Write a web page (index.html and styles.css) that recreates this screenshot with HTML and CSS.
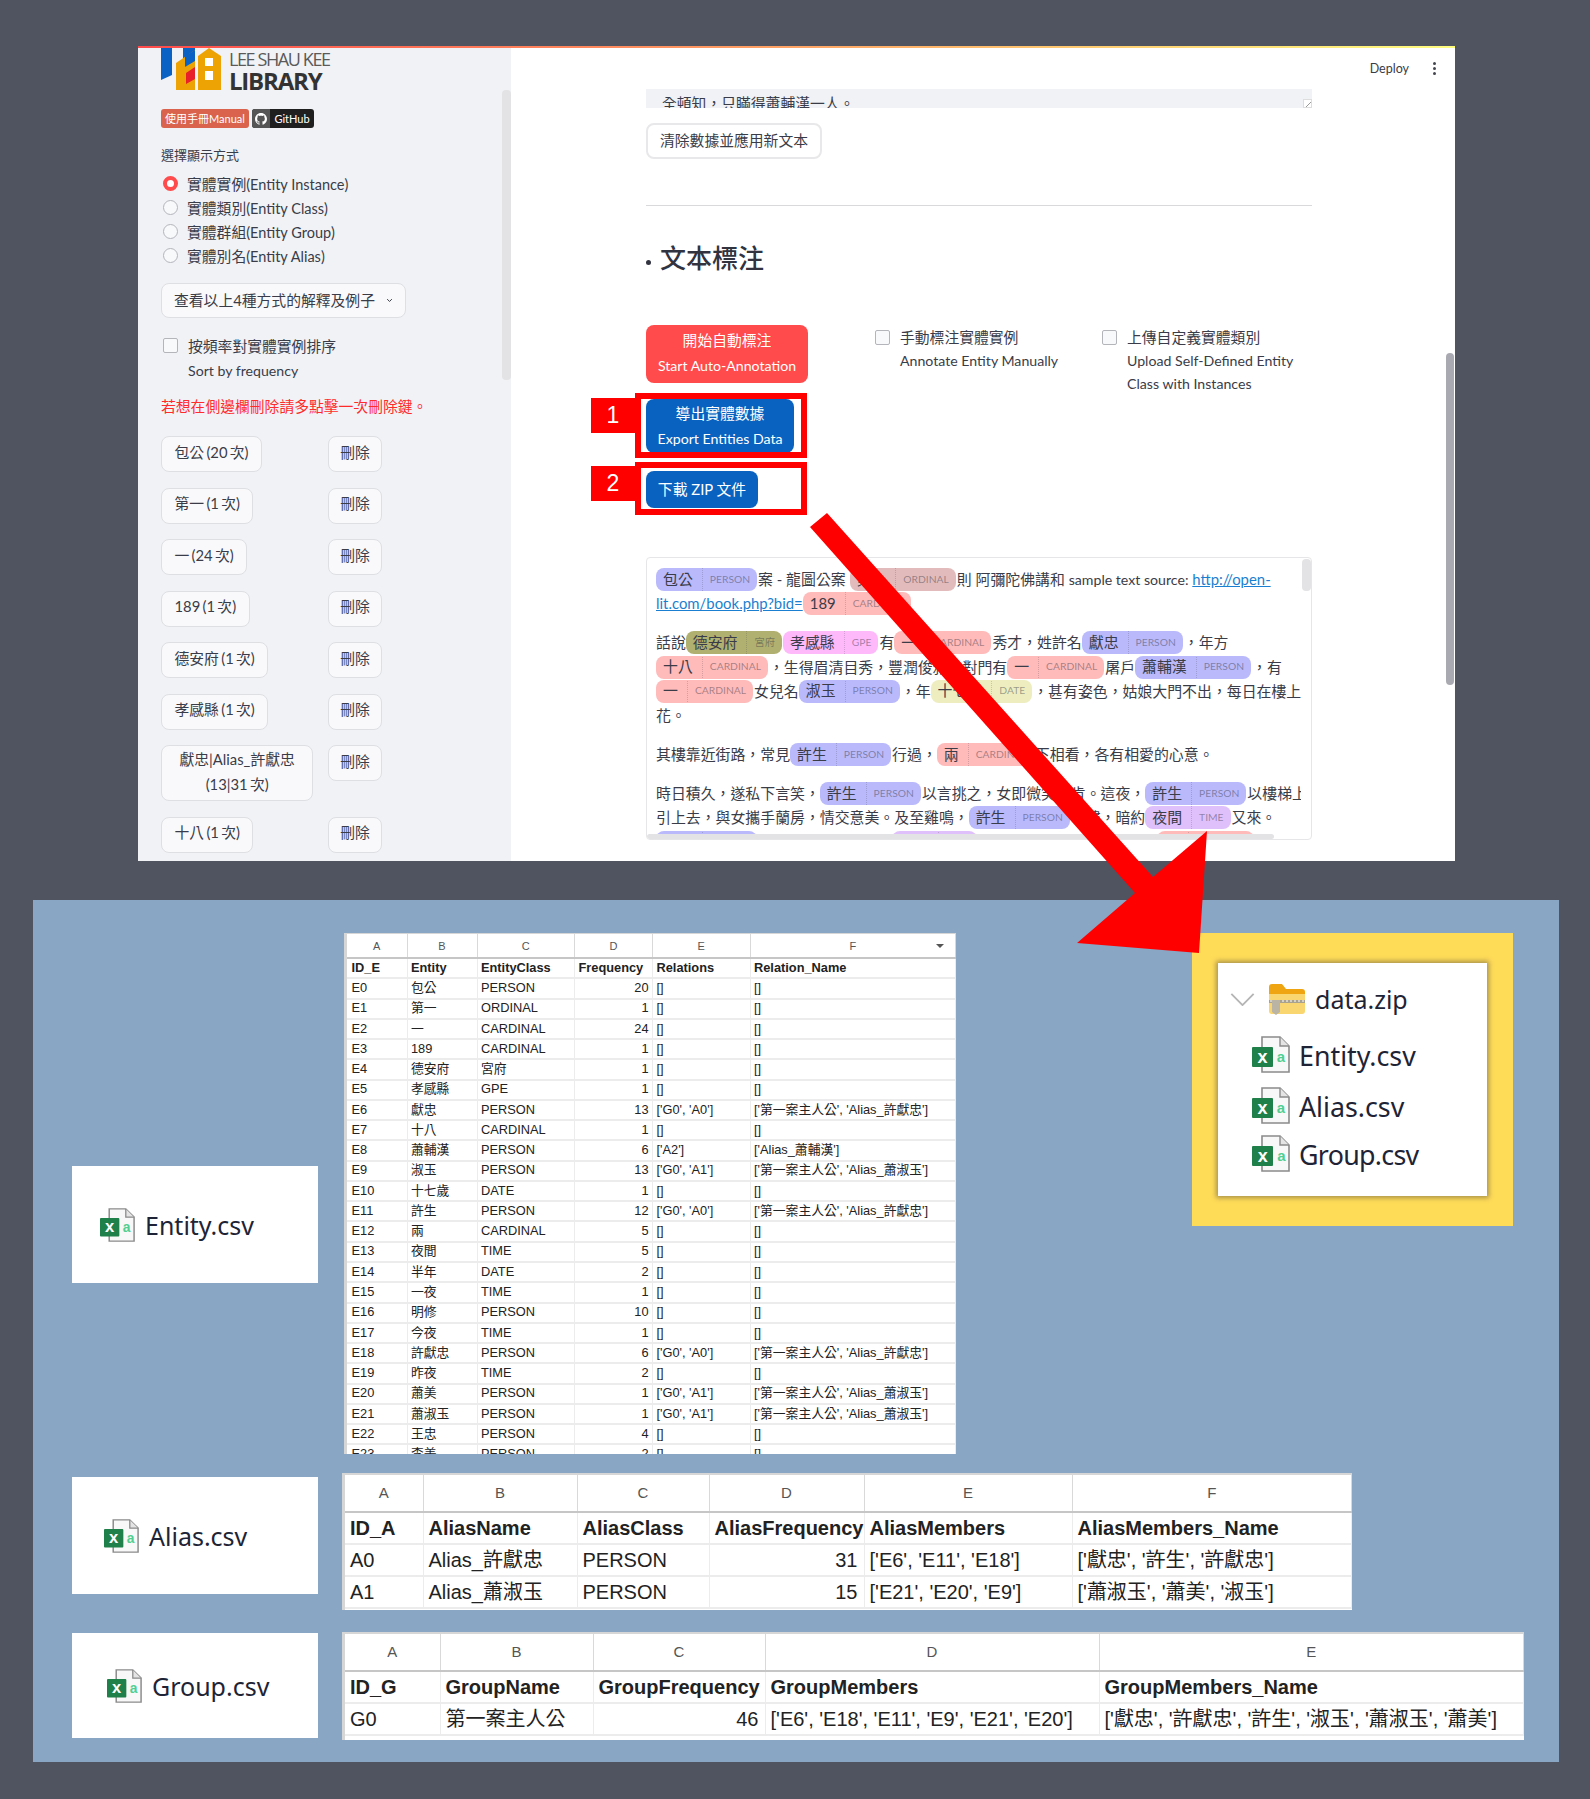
FILE: index.html
```html
<!DOCTYPE html>
<html lang="zh-Hant">
<head>
    <meta charset="UTF-8">
    <title>文本標注</title>
    <link rel="stylesheet" href="styles.css">
</head>
<body>
<!-- shared icons -->
<svg class="icon-defs" aria-hidden="true">
    <symbol id="xls" viewBox="0 0 38 37">
        <path d="M10 1H28L37 10V36H10Z" fill="#f8f8f8" stroke="#8b8b8b" stroke-width="1.6"/>
        <path d="M28 1V10H37" fill="#e4e4e4" stroke="#8b8b8b" stroke-width="1.4"/>
        <rect x="0" y="11" width="21" height="20" rx="1" fill="#1f8049"/>
        <text x="10.5" y="26.5" text-anchor="middle" font-size="18" font-weight="700" fill="#fff" font-family="Liberation Sans">x</text>
        <text x="29" y="26" text-anchor="middle" font-size="15" font-weight="700" fill="#50cf92" font-family="Liberation Sans">a</text>
    </symbol>
</svg>

<div class="page">
    <!-- app screenshot -->
    <div class="app">
        <div class="top-stripe"></div>
        <aside class="sidebar">
            <div class="logo">
                <svg class="logo-mark" viewBox="0 0 62 44">
                    <path d="M0 0H11V29L0 34Z" fill="#0a62c4"/>
                    <path d="M22 0H34V12L22 20Z" fill="#0a62c4"/>
                    <path d="M15 17L34 4V44H15Z" fill="#eea305"/>
                    <path d="M37 10L48 2L60 10V44H37Z" fill="#eea305"/>
                    <path d="M24 10L34 4V15L24 21Z" fill="#0a62c4"/>
                    <path d="M25 27L34 21V33L25 38Z" fill="#e8202a"/>
                    <path d="M44 12L52 12V20L44 20ZM44 25L52 25V34L44 34Z" fill="#fff"/>
                </svg>
                <div class="logo-text">
                    <div class="logo-small">LEE SHAU KEE</div>
                    <div class="logo-big">LIBRARY</div>
                </div>
            </div>
            <div class="badges">
                <span class="badge-manual">使用手冊Manual</span>
                <span class="badge-github">
                    <span class="badge-github-icon">
                        <svg viewBox="0 0 16 16" width="12" height="12"><path fill="#fff" d="M8 0C3.6 0 0 3.6 0 8c0 3.5 2.3 6.5 5.5 7.6.4.1.5-.2.5-.4v-1.4c-2.2.5-2.7-1-2.7-1-.4-.9-.9-1.2-.9-1.2-.7-.5.1-.5.1-.5.8.1 1.2.8 1.2.8.7 1.2 1.9.9 2.3.7.1-.5.3-.9.5-1.1-1.8-.2-3.6-.9-3.6-4 0-.9.3-1.6.8-2.1-.1-.2-.4-1 .1-2.1 0 0 .7-.2 2.2.8.6-.2 1.3-.3 2-.3s1.4.1 2 .3c1.5-1 2.2-.8 2.2-.8.4 1.1.2 1.9.1 2.1.5.6.8 1.3.8 2.1 0 3.1-1.9 3.7-3.7 3.9.3.3.6.8.6 1.5v2.2c0 .2.1.5.6.4C13.7 14.5 16 11.5 16 8c0-4.4-3.6-8-8-8z"/></svg>
                    </span>
                    <span class="badge-github-text">GitHub</span>
                </span>
            </div>
            <div class="field-label">選擇顯示方式</div>
            <div class="radio-group">
                <div class="radio-row"><span class="radio radio-on"></span><span>實體實例<span class="lat">(Entity Instance)</span></span></div>
                <div class="radio-row"><span class="radio"></span><span>實體類別<span class="lat">(Entity Class)</span></span></div>
                <div class="radio-row"><span class="radio"></span><span>實體群組<span class="lat">(Entity Group)</span></span></div>
                <div class="radio-row"><span class="radio"></span><span>實體別名<span class="lat">(Entity Alias)</span></span></div>
            </div>
            <button class="btn btn-side btn-expander">查看以上4種方式的解釋及例子
                <svg viewBox="0 0 12 12" width="12" height="12"><path d="M2 4.5L6 8.5L10 4.5" fill="none" stroke="#31333f" stroke-width="1.6"/></svg>
            </button>
            <div class="check-row check-row-side">
                <span class="checkbox"></span>
                <div>按頻率對實體實例排序<br><span class="lat">Sort by frequency</span></div>
            </div>
            <div class="warn-text">若想在側邊欄刪除請多點擊一次刪除鍵。</div>
            <div class="entity-list">
                <div><button class="btn btn-side">包公 (20 次)</button></div>
                <div><button class="btn btn-side btn-delete">刪除</button></div>
                <div><button class="btn btn-side">第一 (1 次)</button></div>
                <div><button class="btn btn-side btn-delete">刪除</button></div>
                <div><button class="btn btn-side">一 (24 次)</button></div>
                <div><button class="btn btn-side btn-delete">刪除</button></div>
                <div><button class="btn btn-side">189 (1 次)</button></div>
                <div><button class="btn btn-side btn-delete">刪除</button></div>
                <div><button class="btn btn-side">德安府 (1 次)</button></div>
                <div><button class="btn btn-side btn-delete">刪除</button></div>
                <div><button class="btn btn-side">孝感縣 (1 次)</button></div>
                <div><button class="btn btn-side btn-delete">刪除</button></div>
                <div><button class="btn btn-side btn-tall">獻忠|Alias_許獻忠<br>(13|31 次)</button></div>
                <div><button class="btn btn-side btn-delete">刪除</button></div>
                <div><button class="btn btn-side">十八 (1 次)</button></div>
                <div><button class="btn btn-side btn-delete">刪除</button></div>
            </div>
            <div class="side-scroll"></div>
        </aside>

        <main class="main">
            <div class="toolbar">
                <span class="deploy">Deploy</span>
                <span class="dots"><i></i><i></i><i></i></span>
            </div>
            <div class="content">
                <div class="textarea-end">全頓知，只瞞得蕭輔漢一人。<span class="resize-handle"></span></div>
                <button class="btn btn-clear">清除數據並應用新文本</button>
                <hr class="rule">
                <h2 class="section-title"><span class="bullet"></span>文本標注</h2>
                <div class="controls">
                    <div class="control-col control-actions">
                        <button class="btn btn-red">開始自動標注<br><span class="lat">Start Auto-Annotation</span></button>
                        <button class="btn btn-blue btn-export">導出實體數據<br><span class="lat">Export Entities Data</span></button>
                        <button class="btn btn-blue btn-zip">下載 ZIP 文件</button>
                    </div>
                    <div class="control-col control-manual">
                        <div class="check-row">
                            <span class="checkbox"></span>
                            <div>手動標注實體實例<br><span class="lat">Annotate Entity Manually</span></div>
                        </div>
                    </div>
                    <div class="control-col">
                        <div class="check-row">
                            <span class="checkbox"></span>
                            <div>上傳自定義實體類別<br><span class="lat">Upload Self-Defined Entity<br>Class with Instances</span></div>
                        </div>
                    </div>
                </div>

                <div class="annotated">
                    <p>
                        <span class="line"><span class="chip person">包公<b>PERSON</b></span>案 - 龍圖公案 <span class="chip ordinal">第一<b>ORDINAL</b></span>則 阿彌陀佛講和 <span class="lat">sample text source:</span> <a href="#">http://open-</a></span>
                        <span class="line"><a href="#">lit.com/book.php?bid=</a><span class="chip cardinal">189<b>CARDINAL</b></span></span>
                    </p>
                    <p>
                        <span class="line">話說<span class="chip fac">德安府<b>宮府</b></span><span class="chip gpe">孝感縣<b>GPE</b></span>有<span class="chip cardinal">一<b>CARDINAL</b></span>秀才，姓許名<span class="chip person">獻忠<b>PERSON</b></span>，年方</span>
                        <span class="line"><span class="chip cardinal">十八<b>CARDINAL</b></span>，生得眉清目秀，豐潤俊雅。對門有<span class="chip cardinal">一<b>CARDINAL</b></span>屠戶<span class="chip person">蕭輔漢<b>PERSON</b></span>，有</span>
                        <span class="line"><span class="chip cardinal">一<b>CARDINAL</b></span>女兒名<span class="chip person">淑玉<b>PERSON</b></span>，年<span class="chip date">十七歲<b>DATE</b></span>，甚有姿色，姑娘大門不出，每日在樓上</span>
                        <span class="line">花。</span>
                    </p>
                    <p>
                        <span class="line">其樓靠近街路，常見<span class="chip person">許生<b>PERSON</b></span>行過，<span class="chip cardinal">兩<b>CARDINAL</b></span>下相看，各有相愛的心意。</span>
                    </p>
                    <p>
                        <span class="line">時日積久，遂私下言笑，<span class="chip person">許生<b>PERSON</b></span>以言挑之，女即微笑首肯。這夜，<span class="chip person">許生<b>PERSON</b></span>以樓梯上了</span>
                        <span class="line">引上去，與女攜手蘭房，情交意美。及至雞鳴，<span class="chip person">許生<b>PERSON</b></span>下樓，暗約<span class="chip time">夜間<b>TIME</b></span>又來。</span>
                        <span class="line"><span class="chip person">許生<b>PERSON</b></span>如此往來不絕，約有<span class="chip time">一夜<b>TIME</b></span>忽有賊人入內，驚動鄰里，<span class="chip cardinal">兩<b>CARDINAL</b></span></span>
                    </p>
                    <span class="annotated-vscroll"></span>
                    <span class="annotated-hscroll"></span>
                </div>
            </div>
            <div class="main-scroll"></div>
        </main>
    </div>

    <!-- exported files -->
    <section class="files">
        <div class="files-row">
            <div class="file-card file-card-entity">
                <svg class="xls-icon"><use href="#xls"/></svg>Entity.csv
            </div>
            <div class="sheet sheet-entity">
                <table>
                    <colgroup><col><col><col><col><col><col></colgroup>
                    <thead>
                        <tr><th>A</th><th>B</th><th>C</th><th>D</th><th>E</th><th class="filter-col">F</th></tr>
                    </thead>
                    <tbody>
                        <tr class="head-row"><td>ID_E</td><td>Entity</td><td>EntityClass</td><td>Frequency</td><td>Relations</td><td>Relation_Name</td></tr>
                        <tr><td>E0</td><td>包公</td><td>PERSON</td><td class="num">20</td><td>[]</td><td>[]</td></tr>
                        <tr><td>E1</td><td>第一</td><td>ORDINAL</td><td class="num">1</td><td>[]</td><td>[]</td></tr>
                        <tr><td>E2</td><td>一</td><td>CARDINAL</td><td class="num">24</td><td>[]</td><td>[]</td></tr>
                        <tr><td>E3</td><td>189</td><td>CARDINAL</td><td class="num">1</td><td>[]</td><td>[]</td></tr>
                        <tr><td>E4</td><td>德安府</td><td>宮府</td><td class="num">1</td><td>[]</td><td>[]</td></tr>
                        <tr><td>E5</td><td>孝感縣</td><td>GPE</td><td class="num">1</td><td>[]</td><td>[]</td></tr>
                        <tr><td>E6</td><td>獻忠</td><td>PERSON</td><td class="num">13</td><td>['G0', 'A0']</td><td>['第一案主人公', 'Alias_許獻忠']</td></tr>
                        <tr><td>E7</td><td>十八</td><td>CARDINAL</td><td class="num">1</td><td>[]</td><td>[]</td></tr>
                        <tr><td>E8</td><td>蕭輔漢</td><td>PERSON</td><td class="num">6</td><td>['A2']</td><td>['Alias_蕭輔漢']</td></tr>
                        <tr><td>E9</td><td>淑玉</td><td>PERSON</td><td class="num">13</td><td>['G0', 'A1']</td><td>['第一案主人公', 'Alias_蕭淑玉']</td></tr>
                        <tr><td>E10</td><td>十七歲</td><td>DATE</td><td class="num">1</td><td>[]</td><td>[]</td></tr>
                        <tr><td>E11</td><td>許生</td><td>PERSON</td><td class="num">12</td><td>['G0', 'A0']</td><td>['第一案主人公', 'Alias_許獻忠']</td></tr>
                        <tr><td>E12</td><td>兩</td><td>CARDINAL</td><td class="num">5</td><td>[]</td><td>[]</td></tr>
                        <tr><td>E13</td><td>夜間</td><td>TIME</td><td class="num">5</td><td>[]</td><td>[]</td></tr>
                        <tr><td>E14</td><td>半年</td><td>DATE</td><td class="num">2</td><td>[]</td><td>[]</td></tr>
                        <tr><td>E15</td><td>一夜</td><td>TIME</td><td class="num">1</td><td>[]</td><td>[]</td></tr>
                        <tr><td>E16</td><td>明修</td><td>PERSON</td><td class="num">10</td><td>[]</td><td>[]</td></tr>
                        <tr><td>E17</td><td>今夜</td><td>TIME</td><td class="num">1</td><td>[]</td><td>[]</td></tr>
                        <tr><td>E18</td><td>許獻忠</td><td>PERSON</td><td class="num">6</td><td>['G0', 'A0']</td><td>['第一案主人公', 'Alias_許獻忠']</td></tr>
                        <tr><td>E19</td><td>昨夜</td><td>TIME</td><td class="num">2</td><td>[]</td><td>[]</td></tr>
                        <tr><td>E20</td><td>蕭美</td><td>PERSON</td><td class="num">1</td><td>['G0', 'A1']</td><td>['第一案主人公', 'Alias_蕭淑玉']</td></tr>
                        <tr><td>E21</td><td>蕭淑玉</td><td>PERSON</td><td class="num">1</td><td>['G0', 'A1']</td><td>['第一案主人公', 'Alias_蕭淑玉']</td></tr>
                        <tr><td>E22</td><td>王忠</td><td>PERSON</td><td class="num">4</td><td>[]</td><td>[]</td></tr>
                        <tr><td>E23</td><td>李美</td><td>PERSON</td><td class="num">2</td><td>[]</td><td>[]</td></tr>
                    </tbody>
                </table>
            </div>
            <div class="zip-frame">
                <div class="zip-tree">
                    <div class="zip-row zip-root">
                        <svg class="zip-chevron" viewBox="0 0 26 14"><path d="M1 1L13 13L25 1" fill="none" stroke="#b5b5b5" stroke-width="2"/></svg>
                        <svg class="zip-folder" viewBox="0 0 36 31">
                            <path d="M0 3Q0 0 3 0H13L17 5H33Q36 5 36 8V12H0Z" fill="#efa512"/>
                            <path d="M0 10H36V27Q36 30 33 30H3Q0 30 0 27Z" fill="#f9d66f"/>
                            <path d="M0 16H36V19H0Z" fill="#a9a28f"/>
                            <path d="M1 17H35" stroke="#fff" stroke-width="1" stroke-dasharray="2 2"/>
                            <path d="M3 16H11V28L7 31L3 28Z" fill="#b9b4a4"/>
                        </svg>
                        data.zip
                    </div>
                    <div class="zip-row zip-file"><svg class="xls-icon"><use href="#xls"/></svg>Entity.csv</div>
                    <div class="zip-row zip-file"><svg class="xls-icon"><use href="#xls"/></svg>Alias.csv</div>
                    <div class="zip-row zip-file zip-file-last"><svg class="xls-icon"><use href="#xls"/></svg>Group.csv</div>
                </div>
            </div>
        </div>

        <div class="files-row files-row-alias">
            <div class="file-card file-card-alias">
                <svg class="xls-icon"><use href="#xls"/></svg>Alias.csv
            </div>
            <div class="sheet sheet-large sheet-alias">
                <table>
                    <colgroup><col><col><col><col><col><col></colgroup>
                    <thead>
                        <tr><th>A</th><th>B</th><th>C</th><th>D</th><th>E</th><th>F</th></tr>
                    </thead>
                    <tbody>
                        <tr class="head-row"><td>ID_A</td><td>AliasName</td><td>AliasClass</td><td>AliasFrequency</td><td>AliasMembers</td><td>AliasMembers_Name</td></tr>
                        <tr><td>A0</td><td>Alias_許獻忠</td><td>PERSON</td><td class="num">31</td><td>['E6', 'E11', 'E18']</td><td>['獻忠', '許生', '許獻忠']</td></tr>
                        <tr><td>A1</td><td>Alias_蕭淑玉</td><td>PERSON</td><td class="num">15</td><td>['E21', 'E20', 'E9']</td><td>['蕭淑玉', '蕭美', '淑玉']</td></tr>
                    </tbody>
                </table>
            </div>
        </div>

        <div class="files-row files-row-group">
            <div class="file-card file-card-group">
                <svg class="xls-icon"><use href="#xls"/></svg>Group.csv
            </div>
            <div class="sheet sheet-large sheet-group">
                <table>
                    <colgroup><col><col><col><col><col></colgroup>
                    <thead>
                        <tr><th>A</th><th>B</th><th>C</th><th>D</th><th>E</th></tr>
                    </thead>
                    <tbody>
                        <tr class="head-row"><td>ID_G</td><td>GroupName</td><td>GroupFrequency</td><td>GroupMembers</td><td>GroupMembers_Name</td></tr>
                        <tr><td>G0</td><td>第一案主人公</td><td class="num">46</td><td>['E6', 'E18', 'E11', 'E9', 'E21', 'E20']</td><td>['獻忠', '許獻忠', '許生', '淑玉', '蕭淑玉', '蕭美']</td></tr>
                    </tbody>
                </table>
            </div>
        </div>
    </section>

    <!-- red annotations drawn over the collage -->
    <div class="mark-box mark-box-1"></div>
    <div class="mark-box mark-box-2"></div>
    <div class="mark-num mark-num-1">1</div>
    <div class="mark-num mark-num-2">2</div>
    <svg class="arrow" viewBox="0 0 1590 1799">
        <polygon points="827,513 1153,877 1207,831 1199,953 1077,943 1135,893 810,527" fill="#ff0000"/>
    </svg>
</div>
</body>
</html>
```

FILE: styles.css
```css
* {
    box-sizing: border-box;
}

body {
    margin: 0;
    background: #505360;
    color: #3a3c48;
    font-family: "Lato", "Noto Sans CJK TC", sans-serif;
    font-size: 14.8px;
}

/* Latin runs set a little smaller than the CJK around them */
.lat {
    font-size: 14.15px;
}

.icon-defs {
    position: absolute;
    width: 0;
    height: 0;
}

.page {
    position: relative;
    width: 1590px;
    height: 1799px;
    padding-top: 46px;
    overflow: hidden;
}

/* App screenshot */
.app {
    position: relative;
    display: flex;
    width: 1317px;
    height: 815px;
    margin-left: 138px;
    background: #fff;
    overflow: hidden;
}

.top-stripe {
    position: absolute;
    top: 0;
    left: 0;
    right: 0;
    height: 2px;
    background: linear-gradient(90deg, #ff4b4b, #fffd80);
    z-index: 2;
}

.sidebar {
    position: relative;
    flex: 0 0 373px;
    padding-left: 23px;
    background: #f0f2f6;
    overflow: hidden;
}

.logo {
    display: flex;
    height: 44px;
    margin-bottom: 19px;
}

.logo-mark {
    width: 62px;
    height: 44px;
}

.logo-text {
    margin-left: 6px;
}

.logo-small {
    margin-top: 3px;
    font-family: "Open Sans", sans-serif;
    font-size: 18px;
    line-height: 20px;
    letter-spacing: -1.4px;
    color: #5a5a5a;
}

.logo-big {
    margin-top: 1px;
    font-family: "Open Sans", sans-serif;
    font-size: 24px;
    line-height: 22px;
    font-weight: 700;
    letter-spacing: -1.2px;
    color: #333;
}

.badges {
    display: flex;
    gap: 3px;
    height: 19px;
    font-size: 11px;
    line-height: 19px;
    color: #fff;
}

.badge-manual {
    width: 88px;
    text-align: center;
    background: #d9634c;
    border-radius: 3px;
}

.badge-github {
    display: flex;
    width: 62px;
    border-radius: 3px;
    overflow: hidden;
    background: #1f1f1f;
}

.badge-github-icon {
    display: flex;
    align-items: center;
    justify-content: center;
    width: 18px;
    background: #555;
}

.badge-github-text {
    flex: 1;
    text-align: center;
}

.field-label {
    margin: 18px 0 1px;
    font-size: 13px;
    line-height: 18px;
}

.radio-group {
    margin-top: 7px;
}

.radio-row {
    display: flex;
    align-items: center;
    height: 24px;
}

.radio-row .lat {
    font-size: 14.5px;
}

.radio {
    width: 15px;
    height: 15px;
    margin: 0 9px 0 2px;
    background: #f8f9fb;
    border: 1px solid #b4b5bb;
    border-radius: 50%;
}

.radio-on {
    background: #fff;
    border: 4px solid #ff4b4b;
}

/* Buttons */
.btn {
    display: block;
    margin: 0;
    padding: 0 13px;
    font: inherit;
    color: inherit;
    background: #fff;
    border: 1px solid #dedfe3;
    border-radius: 8px;
    white-space: nowrap;
}

.btn-side {
    height: 36px;
    padding: 0 12.5px 6px;
    word-spacing: -1.5px;
    background: #f9f9fb;
}

.btn-delete {
    width: 54px;
    padding: 0 0 6px;
}

.btn-expander {
    display: flex;
    align-items: center;
    gap: 11px;
    width: 245px;
    height: 35px;
    margin-top: 16px;
    padding: 0 12px 2px;
}

.btn-tall {
    height: 56px;
    padding: 0 17.5px 2px;
    line-height: 25px;
}

.check-row {
    display: flex;
    line-height: 23px;
}

.checkbox {
    flex: none;
    width: 15px;
    height: 15px;
    margin: 4px 10px 0 0;
    background: #f8f9fb;
    border: 1px solid #b4b5bb;
    border-radius: 2px;
}

.check-row-side {
    margin-top: 16px;
    padding-left: 2px;
    line-height: 24px;
}

.warn-text {
    margin-top: 11px;
    line-height: 24px;
    color: #ff2b2b;
}

.entity-list {
    display: grid;
    grid-template-columns: 167px 54px;
    row-gap: 15.5px;
    margin-top: 18px;
}

.side-scroll {
    position: absolute;
    top: 44px;
    right: 0;
    width: 9px;
    height: 290px;
    background: #e3e3e5;
    border-radius: 4px;
}

/* Main column */
.main {
    position: relative;
    flex: 1;
}

.toolbar {
    display: flex;
    align-items: center;
    justify-content: flex-end;
    gap: 24px;
    height: 43px;
    padding: 2px 19px 0 0;
    font-size: 12.5px;
}

.dots {
    display: flex;
    flex-direction: column;
    gap: 2px;
}

.dots i {
    width: 3px;
    height: 3px;
    background: #44464f;
    border-radius: 50%;
}

.content {
    width: 801px;
    padding-left: 135px;
}

.textarea-end {
    position: relative;
    height: 19px;
    padding: 4px 0 0 16px;
    line-height: 20px;
    background: #f0f2f6;
    overflow: hidden;
}

.resize-handle {
    position: absolute;
    right: 0;
    bottom: 0;
    width: 9px;
    height: 9px;
    background: linear-gradient(135deg, #fff 60%, #999 60%, #999 70%, #fff 70%);
    border: 1px solid #ddd;
}

.btn-clear {
    height: 36px;
    margin-top: 15px;
    padding: 0 12px 4px;
    border: 2px solid #e8e8ea;
}

.rule {
    height: 1px;
    margin: 46px 0 0;
    background: #d9d9dc;
    border: 0;
}

.section-title {
    height: 36px;
    margin: 34px 0 0;
    font-size: 26px;
    font-weight: 500;
    line-height: 36px;
    color: #31333f;
}

.bullet {
    display: inline-block;
    width: 5px;
    height: 5px;
    margin-right: 9px;
    vertical-align: 3px;
    background: #31333f;
    border-radius: 50%;
}

.controls {
    display: grid;
    grid-template-columns: 229px 227px 1fr;
    margin-top: 49px;
}

.btn-red {
    width: 162px;
    height: 58px;
    padding: 0 0 2px;
    line-height: 25px;
    color: #fff;
    background: #ff4b4b;
    border: 0;
}

.btn-blue {
    color: #fff;
    background: #0a62c0;
    border: 0;
}

.btn-export {
    width: 148px;
    height: 54px;
    margin-top: 16px;
    padding: 0;
    line-height: 25px;
}

.btn-zip {
    width: 112px;
    height: 37px;
    margin-top: 18px;
    padding: 0 0 2px;
}

.control-col > .check-row {
    margin-top: 1px;
}

/* Annotated text */
.annotated {
    position: relative;
    height: 283px;
    margin-top: 49px;
    padding: 10px 10px 0 9px;
    border: 1px solid #e6e6e8;
    border-radius: 4px;
    font-size: 14.9px;
    overflow: hidden;
}

.annotated p {
    margin: 0 0 14.7px;
}

.line {
    display: block;
    height: 24.3px;
    line-height: 22.8px;
    white-space: nowrap;
    overflow: hidden;
}

.annotated a {
    color: #1a7fd0;
}

.chip {
    display: inline-flex;
    align-items: center;
    height: 23px;
    margin-right: 1px;
    padding: 0 7px 1px;
    vertical-align: top;
    line-height: 23px;
    border-radius: 8px;
}

.chip b {
    margin-left: 9px;
    padding-left: 7px;
    font-size: 10.3px;
    font-weight: 400;
    color: rgba(49, 51, 63, .45);
    border-left: 1px dotted rgba(49, 51, 63, .2);
}

.person { background: #b9b9fb; }
.ordinal { background: #e2bcbc; }
.cardinal { background: #ffbaba; }
.fac { background: #b0b070; }
.gpe { background: #feb9fb; }
.date { background: #ededc0; }
.time { background: #e0c0fb; }

.annotated-vscroll {
    position: absolute;
    top: 1px;
    right: 0;
    width: 9px;
    height: 32px;
    background: #e3e3e5;
    border-radius: 4px;
}

.annotated-hscroll {
    position: absolute;
    left: 0;
    bottom: 0;
    width: 627px;
    height: 5px;
    background: #e3e3e5;
    border-radius: 3px;
}

.main-scroll {
    position: absolute;
    top: 307px;
    right: 1px;
    width: 8px;
    height: 332px;
    background: #a9a9b1;
    border-radius: 4px;
}

/* Exported files */
.files {
    width: 1526px;
    height: 862px;
    margin: 39px 0 0 33px;
    padding-top: 33px;
    background: #89a6c4;
    color: #1e2435;
}

.files-row {
    display: flex;
    padding-left: 39px;
}

.files-row-alias {
    margin-top: 19px;
}

.files-row-group {
    margin-top: 22px;
}

.file-card {
    display: flex;
    align-items: center;
    flex: none;
    width: 246px;
    font-family: "Noto Sans", sans-serif;
    font-size: 25px;
    background: #fff;
}

.file-card .xls-icon {
    width: 35px;
    height: 36px;
    margin-right: 10px;
}

.file-card-entity {
    height: 117px;
    margin-top: 233px;
    padding-left: 28px;
}

.file-card-alias {
    height: 117px;
    margin-top: 4px;
    padding-left: 32px;
}

.file-card-group {
    height: 105px;
    margin-top: 1px;
    padding-left: 35px;
}

.sheet {
    flex: none;
    background: #fff;
    border-left: 3px solid #d6d6d6;
    overflow: hidden;
    color: #222;
    font-family: "Liberation Sans", "Noto Sans CJK TC", sans-serif;
}

.sheet table {
    border-collapse: collapse;
    table-layout: fixed;
    width: 100%;
}

.sheet th {
    font-weight: 400;
    color: #555;
    border-right: 1px solid #d9d9d9;
    border-bottom: 2px solid #c6c6c6;
}

.sheet td {
    padding: 0;
    white-space: nowrap;
    overflow: hidden;
    border-right: 1px solid #ececec;
    border-bottom: 2px solid #ececec;
}

.sheet .num {
    text-align: right;
}

.head-row td {
    font-weight: 700;
}

.sheet-entity {
    width: 612px;
    height: 521px;
    margin-left: 26px;
    border-top: 1px solid #d6d6d6;
    font-size: 12.8px;
}

.sheet-entity th {
    height: 24px;
    font-size: 11px;
}

.sheet-entity td {
    height: 20.27px;
    padding: 0 3.5px;
    line-height: 1;
}

.sheet-entity td:first-child {
    padding-left: 4.5px;
}

.sheet-entity col:nth-child(1) { width: 60px; }
.sheet-entity col:nth-child(2) { width: 70px; }
.sheet-entity col:nth-child(3) { width: 97.5px; }
.sheet-entity col:nth-child(4) { width: 78px; }
.sheet-entity col:nth-child(5) { width: 97.5px; }

.filter-col {
    position: relative;
}

.filter-col::after {
    content: "";
    position: absolute;
    top: 10px;
    right: 11px;
    border: 4px solid transparent;
    border-top: 4px solid #555;
    border-bottom: 0;
}

.sheet-large {
    height: 137px;
    margin-left: 24px;
    border-top: 2px solid #d6d6d6;
    font-size: 20px;
}

.sheet-large th {
    height: 37px;
    padding-bottom: 2px;
    font-size: 15px;
}

.sheet-large td {
    height: 32px;
    padding: 0 6px 0 5px;
    line-height: 1;
}

.sheet-alias {
    width: 1010px;
}

.sheet-alias col:nth-child(1) { width: 78px; }
.sheet-alias col:nth-child(2) { width: 154px; }
.sheet-alias col:nth-child(3) { width: 132px; }
.sheet-alias col:nth-child(4) { width: 155px; }
.sheet-alias col:nth-child(5) { width: 208px; }

.sheet-group {
    width: 1182px;
    height: 108px;
}

.sheet-group col:nth-child(1) { width: 95px; }
.sheet-group col:nth-child(2) { width: 153px; }
.sheet-group col:nth-child(3) { width: 172px; }
.sheet-group col:nth-child(4) { width: 334px; }

/* Zip file preview */
.zip-frame {
    flex: none;
    width: 321px;
    height: 293px;
    margin-left: 236px;
    padding: 30px 26px;
    background: #ffdc58;
}

.zip-tree {
    height: 233px;
    padding-top: 18px;
    background: #fff;
    box-shadow: 0 0 5px 2px #a8924a;
    font-family: "Noto Sans", sans-serif;
    font-size: 26.8px;
}

.zip-row {
    display: flex;
    align-items: center;
    height: 36px;
}

.zip-root {
    padding-left: 12px;
    font-size: 25px;
}

.zip-chevron {
    width: 25px;
    height: 13px;
    margin-right: 14px;
}

.zip-folder {
    width: 36px;
    height: 31px;
    margin-right: 10px;
}

.zip-file {
    margin-top: 15px;
    padding: 3px 0 0 34px;
}

.zip-row.zip-root + .zip-file {
    margin-top: 19px;
}

.zip-file-last {
    margin-top: 12px;
    letter-spacing: -.7px;
}

.zip-file .xls-icon {
    width: 38px;
    height: 37px;
    margin: -3px 9px 0 0;
}

/* Red annotations */
.mark-box {
    position: absolute;
    left: 635px;
    width: 172px;
    border: 6px solid #ff0000;
}

.mark-box-1 {
    top: 393px;
    height: 65px;
}

.mark-box-2 {
    top: 462px;
    height: 53px;
}

.mark-num {
    position: absolute;
    left: 591px;
    width: 44px;
    height: 35px;
    font-family: "Liberation Sans", sans-serif;
    font-size: 23px;
    line-height: 35px;
    text-align: center;
    color: #fff;
    background: #ff0000;
}

.mark-num-1 { top: 398px; }
.mark-num-2 { top: 466px; }

.arrow {
    position: absolute;
    top: 0;
    left: 0;
    width: 1590px;
    height: 1799px;
    pointer-events: none;
}
```
